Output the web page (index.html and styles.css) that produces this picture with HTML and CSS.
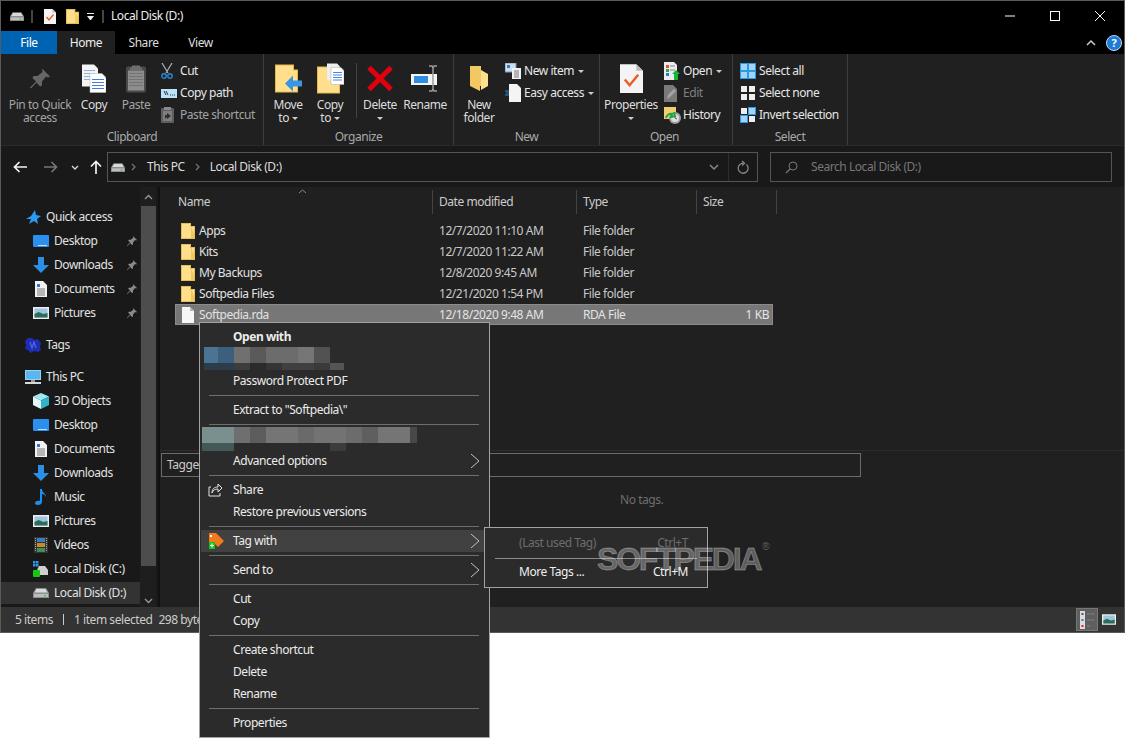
FILE: index.html
```html
<!DOCTYPE html>
<html lang="en">
<head>
  <meta charset="UTF-8">
  <meta name="viewport" content="width=device-width, initial-scale=1.0">
  <title>Local Disk (D:)</title>
  <link rel="stylesheet" href="styles.css">
</head>
<body>
  <svg class="sprite" xmlns="http://www.w3.org/2000/svg">
    <symbol id="i-drive" viewBox="0 0 16 10"><path d="M3 0h10l3 5v5H0V5z" fill="#8d8d8d"/><path d="M3.500 1h9l2 3.500h-13z" fill="#d9d9d9"/><rect x="1" y="6" width="14" height="3" fill="#bdbdbd"/><rect x="11" y="7" width="2" height="1.500" fill="#35d04a"/></symbol>
    <symbol id="i-check" viewBox="0 0 24 30"><path d="M0 0h17l7 7v23H0z" fill="#f4f4f4"/><path d="M17 0l7 7h-7z" fill="#bbb"/><path d="M5 16l5 6 9-11" fill="none" stroke="#ec5a1c" stroke-width="2.500"/></symbol>
    <symbol id="i-folder" viewBox="0 0 14 16"><path d="M0 0h10v3h4v13H0z" fill="#e7bd55"/><path d="M1 1h8v3h4v11H1z" fill="#ffdf8b"/><path d="M10 3v12h3v-5z" fill="#f1c860"/></symbol>
    <symbol id="i-file" viewBox="0 0 12 16"><path d="M0 0h8l4 4v12H0z" fill="#f7f7f7"/><path d="M8 0l4 4H8z" fill="#b5b5b5"/></symbol>
    <symbol id="i-pin" viewBox="0 0 20 20"><path d="M12 0l8 8-2 1-2-1-4 5v4l-2 1-3.500-4L1 20l-1-1 6-6-3.500-3.500 1-2h4l5-4z" fill="currentColor"/></symbol>
    <symbol id="i-copy" viewBox="0 0 24 28"><path d="M0 0h12l4 4v18H0z" fill="#f4f4f4"/><path d="M2 6h11M2 9h11M2 12h11M2 15h11" stroke="#8fb2e0"/><path d="M8 9h12l4 4v15H8z" fill="#fff" stroke="#bbb" stroke-width=".5"/><path d="M10 15h12M10 18h12M10 21h12M10 24h12" stroke="#3f7fdc"/></symbol>
    <symbol id="i-paste" viewBox="0 0 20 28"><rect y="2" width="20" height="26" rx="2" fill="#4a4a4a"/><rect x="2" y="6" width="16" height="20" fill="#8d8d8d"/><path d="M3 9h14M3 12h14M3 15h14M3 18h14M3 21h14" stroke="#737373"/><path d="M6 1h8v2h2v3H4V3h2z" fill="#6d6d6d"/></symbol>
    <symbol id="i-cut" viewBox="0 0 12 16"><path d="M1 0l6 10M11 0L5 10" stroke="#a9a9a9" stroke-width="1.300"/><circle cx="3" cy="13" r="2.200" fill="none" stroke="#2a86d2" stroke-width="1.400"/><circle cx="9" cy="13" r="2.200" fill="none" stroke="#2a86d2" stroke-width="1.400"/></symbol>
    <symbol id="i-path" viewBox="0 0 16 9"><rect width="16" height="9" fill="#bfe1f8"/><path d="M3 2l2 4M5 2l2 4" stroke="#1d3550"/><path d="M9 6h1M11 6h1M13 6h1" stroke="#1d3550"/></symbol>
    <symbol id="i-pshort" viewBox="0 0 13 16"><rect y="1" width="13" height="15" rx="1" fill="#5e5e5e"/><path d="M3 0h7v3H3z" fill="#8a8a8a"/><rect x="2" y="4" width="9" height="10" fill="#7e7e7e"/><path d="M4 12V8h2V6l4 3-4 3v-2z" fill="#2e2e2e"/></symbol>
    <symbol id="i-move" viewBox="0 0 27 28"><path d="M0 0h19v5h4v23H0z" fill="#e4b94e"/><path d="M1 1h17v5h4v21H1z" fill="#ffdf8b"/><path d="M10 19l8-8v5h9v6h-9v5z" fill="#3a96e4"/></symbol>
    <symbol id="i-copyto" viewBox="0 0 27 30"><path d="M0 3h19v5h4v22H0z" fill="#e4b94e"/><path d="M1 4h17v5h4v20H1z" fill="#ffdf8b"/><path d="M10 0h10l3 3v14H10z" fill="#eee"/><path d="M14 4h10l3 3v14H14z" fill="#fff" stroke="#aaa" stroke-width=".5"/><path d="M16 9h9M16 11.500h9M16 14h9M16 16.500h9" stroke="#4a85dc"/></symbol>
    <symbol id="i-delete" viewBox="0 0 26 26"><path d="M2 2l22 22M24 2L2 24" stroke="#e2000f" stroke-width="5"/></symbol>
    <symbol id="i-rename" viewBox="0 0 29 27"><rect y="9" width="26" height="11" fill="#f4f4f4"/><rect x="3" y="11" width="14" height="7" fill="#2f8ee0"/><path d="M18 1h3l1 2 1-2h3M22 3v21M18 26h3l1-2 1 2h3" fill="none" stroke="#9a9a9a" stroke-width="1.500"/></symbol>
    <symbol id="i-newfolder" viewBox="0 0 18 27"><path d="M0 1h11v4l6 16h-7v5L0 21z" fill="#f2c862"/><path d="M11 5v20l7-4V9z" fill="#ffdf8b"/></symbol>
    <symbol id="i-newitem" viewBox="0 0 16 16"><rect width="11" height="9" fill="#c8dff2" stroke="#7f9ab4"/><rect x="2" y="2" width="3" height="3" fill="#3f78b0"/><rect x="7" y="5" width="9" height="11" fill="#f2f2f2"/><path d="M9 8h5M9 10h5M9 12h5M9 14h5" stroke="#777"/></symbol>
    <symbol id="i-easy" viewBox="0 0 16 18"><path d="M4 0h8l4 4v14H4z" fill="#f4f4f4"/><path d="M0 7h4M1 9h3M0 11h4" stroke="#2a86d2" stroke-width="1.200"/></symbol>
    <symbol id="i-open" viewBox="0 0 16 18"><path d="M0 0h10l3 3v15H0z" fill="#ececec"/><rect x="2" y="3" width="3" height="3" fill="#e6552a"/><rect x="2" y="7" width="3" height="3" fill="#2ca64a"/><rect x="2" y="11" width="3" height="3" fill="#2a78d2"/><path d="M6 4h5M6 8h5" stroke="#888"/><path d="M12 8l4 4h-2v6h-4v-6H8z" fill="#15b53a"/></symbol>
    <symbol id="i-edit" viewBox="0 0 14 17"><path d="M0 0h9l4 4v13H0z" fill="#7a7a7a"/><path d="M3 14l1-4 6-6 2 2-6 6z" fill="#a5a5a5"/></symbol>
    <symbol id="i-history" viewBox="0 0 18 17"><path d="M0 0h12v12H0z" fill="#f1cf70"/><circle cx="11" cy="11" r="6" fill="#9c9c9c"/><circle cx="11" cy="11" r="4" fill="#dedede"/><path d="M11 8v3l2 1" stroke="#555" fill="none"/><path d="M2 11a5 5 0 0 1 6-4l-1 3 4-1-1-4" fill="none" stroke="#21a63e" stroke-width="2"/></symbol>
    <symbol id="i-selall" viewBox="0 0 16 16"><rect width="16" height="16" fill="#2a9bea"/><rect x="1" y="1" width="6" height="6" fill="#a3d4f5"/><rect x="9" y="1" width="6" height="6" fill="#a3d4f5"/><rect x="1" y="9" width="6" height="6" fill="#a3d4f5"/><rect x="9" y="9" width="6" height="6" fill="#a3d4f5"/></symbol>
    <symbol id="i-selnone" viewBox="0 0 16 16"><rect x="1" y="1" width="6" height="6" fill="#eee"/><rect x="9" y="1" width="6" height="6" fill="#eee"/><rect x="1" y="9" width="6" height="6" fill="#eee"/><rect x="9" y="9" width="6" height="6" fill="#eee"/></symbol>
    <symbol id="i-selinv" viewBox="0 0 16 16"><rect x="1" y="1" width="6" height="6" fill="#eee"/><rect x="8" width="8" height="8" fill="#2a9bea"/><rect x="9" y="1" width="6" height="6" fill="#a3d4f5"/><rect y="8" width="8" height="8" fill="#2a9bea"/><rect x="1" y="9" width="6" height="6" fill="#a3d4f5"/><rect x="9" y="9" width="6" height="6" fill="#eee"/></symbol>
    <symbol id="i-star" viewBox="0 0 16 16"><path d="M10 1l1 5 5 1-4 3 1 5-4-3-5 3 2-5H1l5-3z" fill="#2b9af3"/></symbol>
    <symbol id="i-desktop" viewBox="0 0 16 12"><rect width="16" height="12" rx="1" fill="#2b8ff0"/><rect x="5" y="10" width="9" height="1" fill="#bfe0ff"/></symbol>
    <symbol id="i-down" viewBox="0 0 16 16"><path d="M5 0h6v8h5l-8 8-8-8h5z" fill="#2b8fe8"/></symbol>
    <symbol id="i-docs" viewBox="0 0 12 16"><path d="M0 0h8l4 4v12H0z" fill="#f2f2f2"/><path d="M2 3h3v3H2z" fill="#2b78c8"/><path d="M2 8h8M2 10h8M2 12h8M2 14h8" stroke="#7a7a7a"/></symbol>
    <symbol id="i-pics" viewBox="0 0 16 12"><rect width="16" height="12" fill="#eee"/><rect x="1.500" y="1.500" width="13" height="9" fill="#9cc6de"/><path d="M1.500 7l4-2 5 2 4-1v4.500h-13z" fill="#2f6b5a"/></symbol>
    <symbol id="i-tags" viewBox="0 0 16 16"><path d="M3 1h4l2 2 4-1 3 4-1 4 1 3-3 2-4-1-3 2-3-3-3-1 1-4-1-4z" fill="#1f2cb4"/><path d="M5 5l2 6 2-6 2 6" fill="none" stroke="#4f63e8" stroke-width="1.300"/></symbol>
    <symbol id="i-pc" viewBox="0 0 16 14"><rect width="16" height="10" fill="#8fd3f8"/><rect x="1" y="1" width="14" height="8" fill="#5bb6ee"/><rect x="6" y="10" width="4" height="2" fill="#9a9a9a"/><rect y="12" width="16" height="2" fill="#d8d8d8"/></symbol>
    <symbol id="i-cube" viewBox="0 0 16 16"><path d="M8 0l8 3.500-8 4-8-4z" fill="#9fe8f2"/><path d="M0 3.500l8 4V16l-8-4z" fill="#e4f6fa"/><path d="M16 3.500l-8 4V16l8-4z" fill="#2fb5c9"/></symbol>
    <symbol id="i-music" viewBox="0 0 12 16"><path d="M5 0h2c0 4 4 4 4 8-1-2-2-3-4-3v8c0 2-2 3-4 3s-3-1-3-2 2-3 5-2z" fill="#1c90ea"/></symbol>
    <symbol id="i-video" viewBox="0 0 14 16"><rect width="14" height="16" fill="#333"/><path d="M1.500 1v14M12.500 1v14" stroke="#aaa" stroke-dasharray="1 1"/><rect x="3" y="1" width="8" height="4" fill="#3a7cc2"/><rect x="3" y="6" width="8" height="4" fill="#c9892b"/><rect x="3" y="11" width="8" height="4" fill="#3f8f54"/></symbol>
    <symbol id="i-diskc" viewBox="0 0 16 16"><rect x="0" y="0" width="2.500" height="2.500" fill="#2a9bea"/><rect x="3" y="0" width="2.500" height="2.500" fill="#2a9bea"/><rect x="0" y="3" width="2.500" height="2.500" fill="#2a9bea"/><rect x="3" y="3" width="2.500" height="2.500" fill="#2a9bea"/><path d="M6 5h6l3 4v5H4V9z" fill="#cfcfcf"/><rect x="0" y="9" width="7" height="7" rx="1" fill="#14c814"/></symbol>
    <symbol id="i-share" viewBox="0 0 15 14"><path d="M3 4H1v9h11v-3M4 10c0-4 2-6 6-6V1l4 4-4 4V6c-3 0-5 1-6 4z" fill="none" stroke="#e4e4e4"/></symbol>
    <symbol id="i-tag" viewBox="0 0 16 16"><path d="M1 0h7l8 8-6 6-5-5H1z" fill="#f27a1a"/><rect x="2" y="2" width="2" height="2" fill="#fff"/><rect x="1" y="9" width="6" height="7" fill="#12c81c"/><path d="M4 10.500v4M2 12.500h4" stroke="#fff"/></symbol>
    <symbol id="i-chev" viewBox="0 0 10 16"><path d="M1 1l8 7-8 7" fill="none" stroke="#b9c3d2"/></symbol>
  </svg>

  <div class="window">
    <div class="titlebar">
      <svg class="tb-drive"><use href="#i-drive"/></svg>
      <span class="tb-sep"></span>
      <svg class="tb-check"><use href="#i-check"/></svg>
      <svg class="tb-folder"><use href="#i-folder"/></svg>
      <span class="tb-more"></span>
      <span class="tb-sep tb-sep2"></span>
      <span class="tb-title">Local Disk (D:)</span>
      <div class="win-buttons">
        <svg width="10" height="10" viewBox="0 0 10 10"><path d="M0 5h10" stroke="#fff"/></svg>
        <svg width="10" height="10" viewBox="0 0 10 10"><rect x=".5" y=".5" width="9" height="9" fill="none" stroke="#fff"/></svg>
        <svg width="10" height="10" viewBox="0 0 10 10"><path d="M0 0l10 10M10 0L0 10" stroke="#fff"/></svg>
      </div>
    </div>

    <div class="tabs">
      <div class="tab tab-file">File</div>
      <div class="tab tab-active">Home</div>
      <div class="tab">Share</div>
      <div class="tab">View</div>
      <svg class="collapse" width="10" height="6" viewBox="0 0 10 6"><path d="M1 5l4-4 4 4" fill="none" stroke="#ccc" stroke-width="1.500"/></svg>
      <div class="help">?</div>
    </div>

    <div class="ribbon">
      <div class="group group-clipboard">
        <div class="group-items">
          <div class="big w70 dim"><svg class="pin-big" width="20" height="20"><use href="#i-pin"/></svg><span>Pin to Quick<br>access</span></div>
          <div class="big w38"><svg width="24" height="28"><use href="#i-copy"/></svg><span>Copy</span></div>
          <div class="big w46 dim"><svg width="20" height="28"><use href="#i-paste"/></svg><span>Paste</span></div>
          <div class="small-col">
            <div class="small"><span class="ic"><svg width="12" height="16"><use href="#i-cut"/></svg></span>Cut</div>
            <div class="small"><span class="ic"><svg width="16" height="9"><use href="#i-path"/></svg></span>Copy path</div>
            <div class="small dim"><span class="ic"><svg width="13" height="16"><use href="#i-pshort"/></svg></span>Paste shortcut</div>
          </div>
        </div>
        <div class="group-label">Clipboard</div>
      </div>
      <div class="group group-organize">
        <div class="group-items">
          <div class="big w42"><svg width="27" height="28"><use href="#i-move"/></svg><span>Move<br>to <i class="caret"></i></span></div>
          <div class="big w42"><svg width="27" height="30"><use href="#i-copyto"/></svg><span>Copy<br>to <i class="caret"></i></span></div>
          <div class="rib-sep"></div>
          <div class="big w38"><svg width="26" height="26"><use href="#i-delete"/></svg><span>Delete<br><i class="caret"></i></span></div>
          <div class="big w52"><svg width="29" height="27"><use href="#i-rename"/></svg><span>Rename</span></div>
        </div>
        <div class="group-label">Organize</div>
      </div>
      <div class="group group-new">
        <div class="group-items">
          <div class="big w48"><svg width="18" height="27"><use href="#i-newfolder"/></svg><span>New<br>folder</span></div>
          <div class="small-col">
            <div class="small"><span class="ic"><svg width="16" height="16"><use href="#i-newitem"/></svg></span>New item <i class="caret"></i></div>
            <div class="small"><span class="ic"><svg width="16" height="18"><use href="#i-easy"/></svg></span>Easy access <i class="caret"></i></div>
          </div>
        </div>
        <div class="group-label">New</div>
      </div>
      <div class="group group-open">
        <div class="group-items">
          <div class="big w62"><svg width="23" height="28"><use href="#i-check"/></svg><span>Properties<br><i class="caret"></i></span></div>
          <div class="small-col">
            <div class="small"><span class="ic"><svg width="16" height="18"><use href="#i-open"/></svg></span>Open <i class="caret"></i></div>
            <div class="small dim2"><span class="ic"><svg width="14" height="17"><use href="#i-edit"/></svg></span>Edit</div>
            <div class="small"><span class="ic"><svg width="18" height="17"><use href="#i-history"/></svg></span>History</div>
          </div>
        </div>
        <div class="group-label">Open</div>
      </div>
      <div class="group group-select">
        <div class="group-items">
          <div class="small-col">
            <div class="small"><span class="ic"><svg width="16" height="16"><use href="#i-selall"/></svg></span>Select all</div>
            <div class="small"><span class="ic"><svg width="16" height="16"><use href="#i-selnone"/></svg></span>Select none</div>
            <div class="small"><span class="ic"><svg width="16" height="16"><use href="#i-selinv"/></svg></span>Invert selection</div>
          </div>
        </div>
        <div class="group-label">Select</div>
      </div>
    </div>

    <div class="navbar">
      <svg class="nav-back" width="14" height="12" viewBox="0 0 14 12"><path d="M14 6H2M6.500 1L1.500 6l5 5" fill="none" stroke="#f2f2f2" stroke-width="1.700"/></svg>
      <svg class="nav-fwd" width="14" height="12" viewBox="0 0 14 12"><path d="M0 6h12M7.500 1l5 5-5 5" fill="none" stroke="#777" stroke-width="1.700"/></svg>
      <svg class="nav-drop" width="8" height="5" viewBox="0 0 8 5"><path d="M1 1l3 3 3-3" fill="none" stroke="#ddd" stroke-width="1.300"/></svg>
      <svg class="nav-up" width="12" height="14" viewBox="0 0 12 14"><path d="M6 14V2M1 6.500l5-5 5 5" fill="none" stroke="#f2f2f2" stroke-width="1.700"/></svg>
      <div class="address">
        <svg class="addr-drive" width="14" height="9"><use href="#i-drive"/></svg>
        <svg class="crumb" width="5" height="8" viewBox="0 0 5 8"><path d="M1 1l3 3-3 3" fill="none" stroke="#777" stroke-width="1.200"/></svg>
        <span class="addr-text">This PC</span>
        <svg class="crumb" width="5" height="8" viewBox="0 0 5 8"><path d="M1 1l3 3-3 3" fill="none" stroke="#777" stroke-width="1.200"/></svg>
        <span class="addr-text">Local Disk (D:)</span>
        <svg class="addr-drop" width="10" height="6" viewBox="0 0 10 6"><path d="M1 1l4 4 4-4" fill="none" stroke="#888" stroke-width="1.500"/></svg>
        <div class="addr-refresh"><svg width="12" height="13" viewBox="0 0 12 13"><path d="M9.500 3.500a5 5 0 1 1-3.500-1.300M5 0l2.500 2.200L5 4.500" fill="none" stroke="#888" stroke-width="1.300"/></svg></div>
      </div>
      <div class="search">
        <svg width="13" height="13" viewBox="0 0 13 13"><circle cx="8" cy="5" r="4" fill="none" stroke="#777"/><path d="M5 8l-4 4" stroke="#777" stroke-width="1.300"/></svg>
        <span>Search Local Disk (D:)</span>
      </div>
    </div>

    <div class="content">
      <div class="sidebar">
        <div class="tree">
          <div class="node top"><svg width="16" height="16"><use href="#i-star"/></svg>Quick access</div>
          <div class="node"><svg width="16" height="12"><use href="#i-desktop"/></svg>Desktop<svg class="node-pin" width="10" height="10"><use href="#i-pin"/></svg></div>
          <div class="node"><svg width="16" height="16"><use href="#i-down"/></svg>Downloads<svg class="node-pin" width="10" height="10"><use href="#i-pin"/></svg></div>
          <div class="node"><svg width="16" height="16"><use href="#i-docs"/></svg>Documents<svg class="node-pin" width="10" height="10"><use href="#i-pin"/></svg></div>
          <div class="node"><svg width="16" height="12"><use href="#i-pics"/></svg>Pictures<svg class="node-pin" width="10" height="10"><use href="#i-pin"/></svg></div>
          <div class="node top spaced"><svg width="16" height="16"><use href="#i-tags"/></svg>Tags</div>
          <div class="node top spaced"><svg width="16" height="14"><use href="#i-pc"/></svg>This PC</div>
          <div class="node"><svg width="16" height="16"><use href="#i-cube"/></svg>3D Objects</div>
          <div class="node"><svg width="16" height="12"><use href="#i-desktop"/></svg>Desktop</div>
          <div class="node"><svg width="16" height="16"><use href="#i-docs"/></svg>Documents</div>
          <div class="node"><svg width="16" height="16"><use href="#i-down"/></svg>Downloads</div>
          <div class="node"><svg width="16" height="16"><use href="#i-music"/></svg>Music</div>
          <div class="node"><svg width="16" height="12"><use href="#i-pics"/></svg>Pictures</div>
          <div class="node"><svg width="16" height="16"><use href="#i-video"/></svg>Videos</div>
          <div class="node"><svg width="16" height="16"><use href="#i-diskc"/></svg>Local Disk (C:)</div>
          <div class="node current"><svg width="16" height="10"><use href="#i-drive"/></svg>Local Disk (D:)</div>
        </div>
        <div class="scrollbar">
          <svg width="9" height="6" viewBox="0 0 9 6"><path d="M1 5l3.500-3.500L8 5" fill="none" stroke="#999" stroke-width="1.300"/></svg>
          <div class="thumb"></div>
          <svg width="9" height="6" viewBox="0 0 9 6"><path d="M1 1l3.500 3.500L8 1" fill="none" stroke="#999" stroke-width="1.300"/></svg>
        </div>
      </div>
      <div class="main">
        <div class="files">
          <div class="columns">
            <svg class="sort" width="9" height="5" viewBox="0 0 9 5"><path d="M1 4l3.500-3L8 4" fill="none" stroke="#888"/></svg>
            <div class="col">Name</div>
            <div class="col">Date modified</div>
            <div class="col">Type</div>
            <div class="col">Size</div>
          </div>
          <div class="row"><div class="cell-name"><svg width="14" height="16"><use href="#i-folder"/></svg>Apps</div><div>12/7/2020 11:10 AM</div><div>File folder</div><div></div></div>
          <div class="row"><div class="cell-name"><svg width="14" height="16"><use href="#i-folder"/></svg>Kits</div><div>12/7/2020 11:22 AM</div><div>File folder</div><div></div></div>
          <div class="row"><div class="cell-name"><svg width="14" height="16"><use href="#i-folder"/></svg>My Backups</div><div>12/8/2020 9:45 AM</div><div>File folder</div><div></div></div>
          <div class="row"><div class="cell-name"><svg width="14" height="16"><use href="#i-folder"/></svg>Softpedia Files</div><div>12/21/2020 1:54 PM</div><div>File folder</div><div></div></div>
          <div class="row selected"><div class="cell-name"><svg width="14" height="16"><use href="#i-file"/></svg>Softpedia.rda</div><div>12/18/2020 9:48 AM</div><div>RDA File</div><div class="cell-size">1 KB</div></div>
        </div>
        <div class="pane">
          <div class="tagbox">Tagged with</div>
          <div class="no-tags">No tags.</div>
        </div>
      </div>
    </div>

    <div class="status">
      <span>5 items</span>
      <span class="status-bar"></span>
      <span>1 item selected</span>
      <span class="status-size">298 bytes</span>
      <div class="view-details">
        <svg width="14" height="18" viewBox="0 0 14 18"><rect x="0" y="0" width="5" height="18" fill="#ddd"/><rect x="1.500" y="2" width="2" height="2" fill="#555"/><rect x="1.500" y="8" width="2" height="2" fill="#2a78d2"/><rect x="1.500" y="14" width="2" height="2" fill="#d22"/><path d="M7 3h3M11 3h3M7 9h3M11 9h3M7 15h3" stroke="#888"/></svg>
      </div>
      <svg class="view-large" width="14" height="11"><use href="#i-pics"/></svg>
    </div>
  </div>

  <div class="menu">
    <div class="item strong">Open with</div>
    <svg class="blur blur-a" width="140" height="23" shape-rendering="crispEdges">
      <rect width="14" height="16" fill="#4a7494"/><rect x="14" width="16" height="16" fill="#3b5f7c"/><rect x="30" width="16" height="16" fill="#707070"/><rect x="46" width="16" height="16" fill="#5a5a5a"/><rect x="62" width="32" height="16" fill="#6c6c6c"/><rect x="94" width="16" height="16" fill="#767676"/><rect x="110" width="16" height="16" fill="#525252"/>
      <rect y="16" width="30" height="7" fill="#2c3c4b"/><rect x="30" y="16" width="16" height="7" fill="#3d3d3d"/><rect x="62" y="16" width="16" height="7" fill="#353535"/><rect x="78" y="16" width="32" height="7" fill="#404040"/><rect x="110" y="16" width="16" height="7" fill="#3a3a3a"/><rect x="126" y="16" width="14" height="7" fill="#555"/>
    </svg>
    <div class="item">Password Protect PDF</div>
    <div class="sep"></div>
    <div class="item">Extract to "Softpedia\"</div>
    <div class="sep"></div>
    <svg class="blur blur-b" width="215" height="24" shape-rendering="crispEdges">
      <rect width="32" height="16" fill="#7a9090"/><rect x="32" width="16" height="16" fill="#6f6f6f"/><rect x="48" width="16" height="16" fill="#5d5d5d"/><rect x="64" width="32" height="16" fill="#757575"/><rect x="96" width="16" height="16" fill="#6a6a6a"/><rect x="112" width="32" height="16" fill="#737373"/><rect x="144" width="16" height="16" fill="#6c6c6c"/><rect x="160" width="16" height="16" fill="#5f5f5f"/><rect x="176" width="32" height="16" fill="#757575"/><rect x="208" width="7" height="16" fill="#484848"/>
      <rect y="16" width="32" height="8" fill="#455858"/><rect x="128" y="16" width="16" height="8" fill="#3c3c3c"/>
    </svg>
    <div class="item">Advanced options<svg class="arrow" width="10" height="16"><use href="#i-chev"/></svg></div>
    <div class="sep"></div>
    <div class="item with-icon"><svg width="15" height="14"><use href="#i-share"/></svg>Share</div>
    <div class="item">Restore previous versions</div>
    <div class="sep"></div>
    <div class="item with-icon hover"><svg width="16" height="16"><use href="#i-tag"/></svg>Tag with<svg class="arrow" width="10" height="16"><use href="#i-chev"/></svg></div>
    <div class="sep"></div>
    <div class="item">Send to<svg class="arrow" width="10" height="16"><use href="#i-chev"/></svg></div>
    <div class="sep"></div>
    <div class="item">Cut</div>
    <div class="item">Copy</div>
    <div class="sep"></div>
    <div class="item">Create shortcut</div>
    <div class="item">Delete</div>
    <div class="item">Rename</div>
    <div class="sep"></div>
    <div class="item">Properties</div>
  </div>

  <div class="submenu">
    <div class="sub-item disabled"><span>(Last used Tag)</span><span>Ctrl+T</span></div>
    <div class="sub-sep"></div>
    <div class="sub-item"><span>More Tags ...</span><span>Ctrl+M</span></div>
  </div>

  <div class="watermark">SOFTPEDIA<sup>®</sup></div>
</body>
</html>
```

FILE: styles.css
```css
* {
  box-sizing: border-box;
}
html, body {
  height: 739px;
  overflow: hidden;
}
body {
  margin: 0;
  position: relative;
  background: #fff;
  color: #e6e6e6;
  font-family: "Noto Sans", sans-serif;
  font-size: 12px;
  letter-spacing: -0.45px;
  line-height: 16px;
}
svg {
  display: block;
  flex: none;
  overflow: visible;
}
.sprite {
  display: none;
}
.window {
  height: 633px;
  border: 1px solid #5a5a5a;
  display: flex;
  flex-direction: column;
  background: #191919;
}

/* title bar */
.titlebar {
  height: 30px;
  background: #000;
  display: flex;
  align-items: center;
}
.tb-drive {
  width: 14px;
  height: 9px;
  margin-left: 9px;
}
.tb-sep {
  width: 2px;
  height: 13px;
  background: #444;
  margin-left: 7px;
}
.tb-check {
  width: 12px;
  height: 15px;
  margin-left: 11px;
}
.tb-folder {
  width: 13px;
  height: 15px;
  margin-left: 10px;
}
.tb-more {
  width: 7px;
  height: 6px;
  margin-left: 8px;
  border-top: 1px solid #eee;
}
.tb-more::after {
  content: "";
  display: block;
  margin-top: 2px;
  border: 3.5px solid transparent;
  border-top: 4px solid #eee;
  border-bottom: 0;
}
.tb-sep2 {
  margin-left: 8px;
}
.tb-title {
  margin-left: 7px;
  color: #eee;
}
.win-buttons {
  margin-left: auto;
  display: flex;
  align-items: center;
  gap: 35px;
  margin-right: 19px;
}

/* tabs */
.tabs {
  height: 23px;
  background: #000;
  display: flex;
  align-items: center;
}
.tab {
  width: 57px;
  height: 100%;
  padding-top: 1px;
  display: flex;
  align-items: center;
  justify-content: center;
  color: #ddd;
}
.tab-file {
  width: 56px;
  background: #0063b1;
  color: #fff;
}
.tab-active {
  width: 58px;
  background: #202020;
  color: #eee;
}
.collapse {
  margin-left: auto;
}
.help {
  width: 16px;
  height: 16px;
  border-radius: 50%;
  background: #1c7cd6;
  border: 1px solid #bcdcf6;
  color: #fff;
  font-weight: 700;
  font-size: 11px;
  line-height: 14px;
  text-align: center;
  margin: 0 2px 0 10px;
}

/* ribbon */
.ribbon {
  height: 92px;
  background: #202020;
  border-bottom: 1px solid #2a2a2a;
  display: flex;
}
.group {
  display: flex;
  flex-direction: column;
  border-right: 1px solid #3d3d3d;
}
.group-clipboard { width: 263px; }
.group-organize { width: 190px; }
.group-new { width: 146px; }
.group-open { width: 133px; }
.group-select { width: 115px; }
.group-items {
  height: 74px;
  padding-top: 5px;
  display: flex;
}
.group-clipboard .group-items { padding-left: 4px; }
.group-organize .group-items { padding-left: 3px; }
.group-new .group-items { padding-left: 1px; }
.group-select .group-items { padding-left: 5px; }
.group-label {
  height: 17px;
  text-align: center;
  color: #aaa;
  line-height: 18px;
}
.group-open .group-label {
  padding-right: 3px;
}
.big {
  display: flex;
  flex-direction: column;
  align-items: center;
  text-align: center;
  line-height: 13px;
  color: #ddd;
}
.big svg {
  height: 39px;
}
.big svg.pin-big {
  color: #666;
}
.big span {
  white-space: nowrap;
}
.w38 { width: 38px; }
.w42 { width: 42px; }
.w46 { width: 46px; }
.w48 { width: 48px; }
.w52 { width: 52px; }
.w62 { width: 62px; }
.w70 { width: 70px; }
.dim { color: #a4a4a4; }
.dim2 { color: #808080; }
.rib-sep {
  width: 1px;
  height: 55px;
  background: #444;
  margin: 4px 4px 0 5px;
}
.small-col {
  margin: 1px 0 0 2px;
  display: flex;
  flex-direction: column;
}
.small {
  height: 22px;
  display: flex;
  align-items: center;
  white-space: nowrap;
}
.ic {
  width: 19px;
  height: 18px;
  display: flex;
  align-items: center;
  flex: none;
}
.small .caret {
  margin-left: 4px;
}
.caret {
  display: inline-block;
  vertical-align: middle;
  width: 0;
  height: 0;
  border: 3px solid transparent;
  border-top: 3px solid #ccc;
  border-bottom: 0;
}

/* address bar */
.navbar {
  height: 41px;
  background: #191919;
  display: flex;
  align-items: center;
  padding-top: 1px;
}
.nav-back { margin-left: 12px; }
.nav-fwd { margin-left: 17px; }
.nav-drop { margin-left: 13px; }
.nav-up { margin-left: 11px; }
.address {
  width: 651px;
  height: 30px;
  margin-left: 5px;
  border: 1px solid #555;
  display: flex;
  align-items: center;
  color: #ddd;
}
.addr-drive { margin-left: 3px; }
.crumb { margin: 0 11px 0 6px; }
.crumb + .addr-text + .crumb { margin: 0 10px; }
.addr-drop { margin-left: auto; margin-right: 9px; }
.addr-refresh {
  width: 29px;
  height: 100%;
  border-left: 1px solid #2d2d2d;
  display: flex;
  align-items: center;
  justify-content: center;
}
.search {
  width: 342px;
  height: 30px;
  margin-left: 12px;
  border: 1px solid #555;
  display: flex;
  align-items: center;
  gap: 13px;
  padding-left: 14px;
  color: #777;
}

/* nav pane and file list */
.content {
  height: 420px;
  display: flex;
}
.sidebar {
  width: 159px;
  display: flex;
  background: #191919;
  border-right: 2px solid #111;
}
.tree {
  width: 139px;
  padding-top: 18px;
}
.node {
  height: 24px;
  display: flex;
  align-items: center;
  gap: 5px;
  padding-left: 32px;
  color: #e2e2e2;
  white-space: nowrap;
}
.node.top {
  padding-left: 24px;
}
.node.spaced {
  margin-top: 8px;
}
.node.current {
  height: 22px;
  margin-top: 1px;
  background: #333;
}
.node-pin {
  color: #8a8a8a;
  margin-left: auto;
  margin-right: 3px;
}
.scrollbar {
  width: 16px;
  display: flex;
  flex-direction: column;
  align-items: center;
  padding-top: 7px;
  background: #1e1e1e;
}
.thumb {
  width: 15px;
  height: 360px;
  margin: 6px 0 32px;
  background: #4d4d4d;
}
.main {
  flex: 1;
  background: #202020;
  display: flex;
  flex-direction: column;
}
.files {
  height: 263px;
  padding-left: 15px;
}
.columns {
  position: relative;
  display: grid;
  grid-template-columns: 258px 144px 120px 80px;
  height: 27px;
  margin-bottom: 6px;
}
.col {
  margin-top: 3px;
  height: 24px;
  padding-left: 6px;
  line-height: 23px;
  border-right: 1px solid #444;
  color: #ccc;
}
.col:first-of-type {
  padding-left: 3px;
}
.sort {
  position: absolute;
  left: 123px;
  top: 2px;
}
.row {
  display: grid;
  width: 598px;
  grid-template-columns: 258px 144px 120px 76px;
  height: 21px;
  align-items: center;
  color: #c9c9c9;
}
.row > div + div {
  padding-left: 6px;
}
.cell-name {
  display: flex;
  align-items: center;
  gap: 4px;
  padding-left: 6px;
  color: #e2e2e2;
}
.row.selected {
  background: #777;
  color: #e4e4e4;
  box-shadow: inset 0 0 0 1px #8b8b8b;
}
.row .cell-size {
  padding-right: 4px;
  text-align: right;
}
.pane {
  flex: 1;
  border-top: 1px solid #2c2c2c;
  padding: 2px 0 0 1px;
}
.tagbox {
  width: 700px;
  height: 24px;
  border: 1px solid #6b6b6b;
  padding-left: 5px;
  line-height: 22px;
  color: #ccc;
}
.no-tags {
  margin: 15px 0 0 459px;
  color: #6e6e6e;
}

/* status bar */
.status {
  height: 25px;
  background: #333;
  display: flex;
  align-items: center;
  padding-left: 14px;
  color: #ccc;
}
.status > span {
  padding-top: 1px;
}
.status > .status-bar {
  width: 1px;
  height: 11px;
  padding: 0;
  background: #ccc;
  margin: 0 10px;
}
.status-size {
  margin-left: 6px;
}
.view-details {
  margin-left: auto;
  width: 22px;
  height: 23px;
  background: #5f5f5f;
  border: 1px solid #777;
  display: flex;
  align-items: center;
  justify-content: center;
}
.view-large {
  margin: 0 8px 0 4px;
}

/* context menu */
.menu {
  position: absolute;
  left: 199px;
  top: 322px;
  width: 291px;
  height: 416px;
  padding: 3px 1px;
  background: #2b2b2b;
  border: 1px solid #a3a3a3;
  color: #ececec;
}
.item {
  height: 22px;
  display: flex;
  align-items: center;
  padding-left: 32px;
  white-space: nowrap;
}
.item.strong {
  font-weight: 700;
}
.item.with-icon {
  padding-left: 7px;
}
.item.with-icon svg:first-child {
  margin-right: 10px;
}
.item.hover svg:first-child {
  margin-right: 9px;
}
.item.hover {
  background: #414141;
}
.arrow {
  margin-left: auto;
  margin-right: 8px;
}
.sep {
  height: 1px;
  margin: 3px 9px 3px 8px;
  background: #6e6e6e;
}
.blur-a {
  margin: -1px 0 0 3px;
}
.blur-b {
  margin: -1px 0 -1px 1px;
}
.submenu {
  position: absolute;
  left: 484px;
  top: 527px;
  width: 224px;
  height: 61px;
  padding: 4px 19px 0 34px;
  background: #2b2b2b;
  border: 1px solid #a3a3a3;
  color: #f0f0f0;
}
.sub-item {
  height: 22px;
  display: flex;
  align-items: center;
  justify-content: space-between;
  white-space: nowrap;
}
.sub-item.disabled {
  color: #6d6d6d;
}
.sub-sep {
  height: 1px;
  margin: 4px -9px 2px -24px;
  background: #8a8a8a;
}
.watermark {
  position: absolute;
  left: 597px;
  top: 539px;
  font-family: "Liberation Sans", sans-serif;
  font-size: 32px;
  font-weight: 700;
  line-height: 40px;
  letter-spacing: -2.2px;
  -webkit-text-stroke: 0.8px rgba(255, 255, 255, 0.3);
  color: rgba(255, 255, 255, 0.3);
  white-space: nowrap;
}
.watermark sup {
  font-size: 10px;
  font-weight: 400;
  letter-spacing: 0;
  -webkit-text-stroke: 0;
  position: relative;
  top: 0;
  left: 2px;
  vertical-align: top;
  line-height: 16px;
}
```
